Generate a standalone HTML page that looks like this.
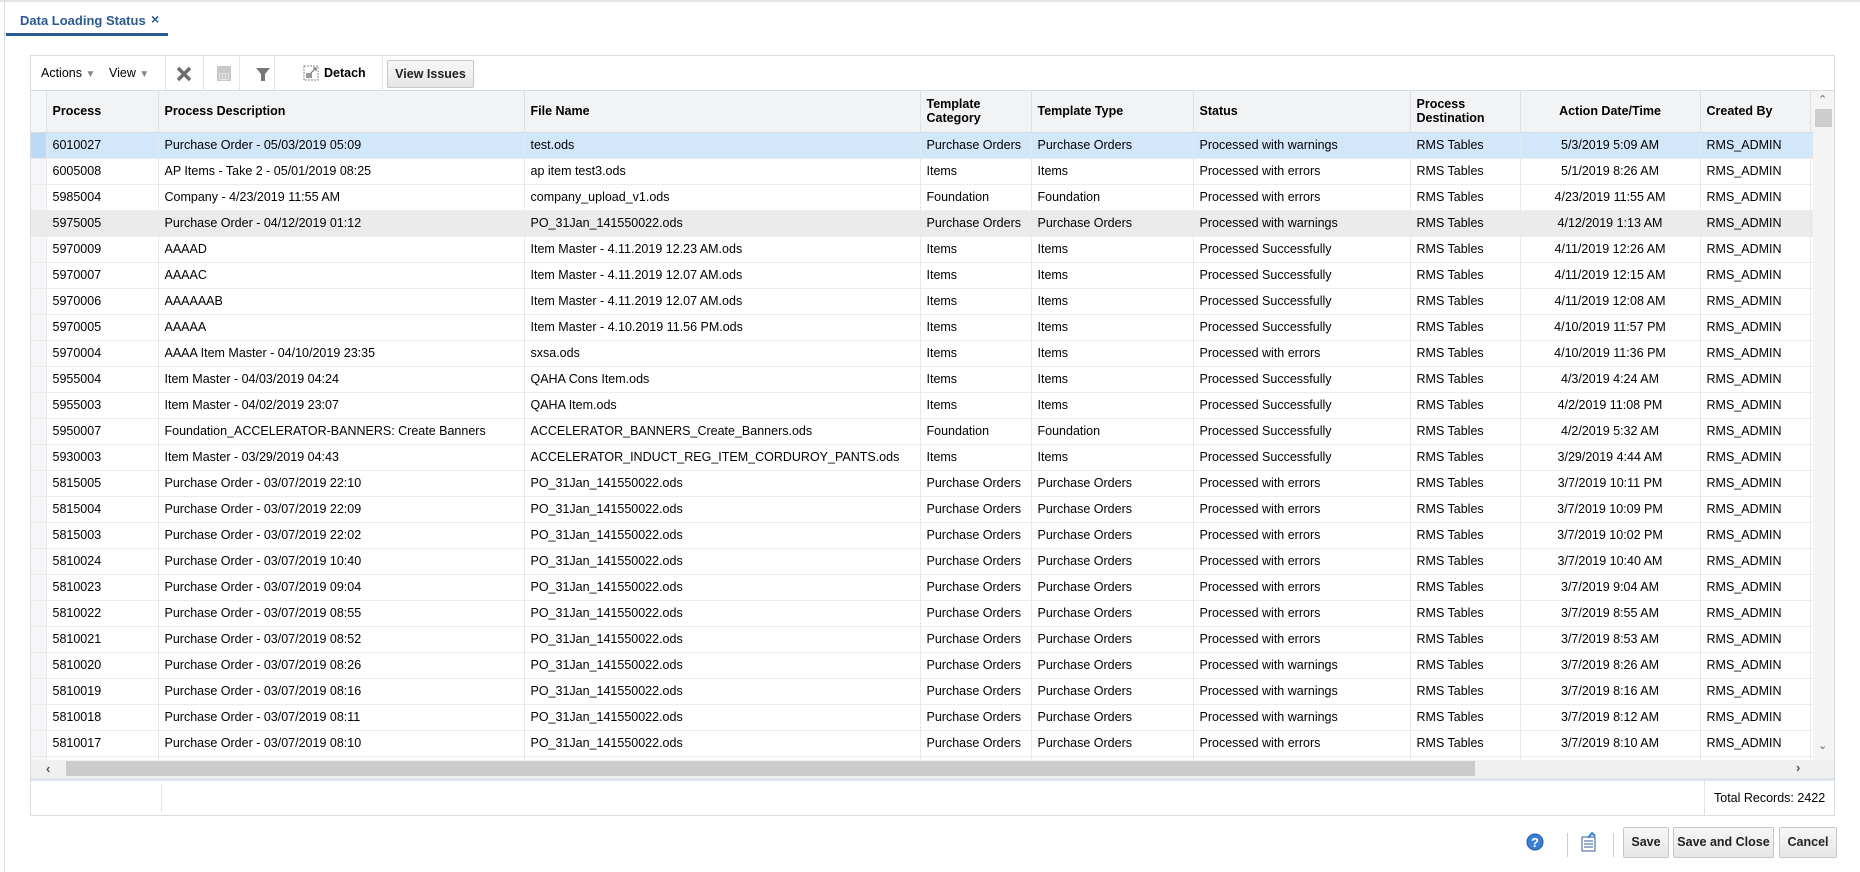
<!DOCTYPE html>
<html><head><meta charset="utf-8">
<style>
*{box-sizing:border-box;margin:0;padding:0}
body{width:1860px;height:872px;position:relative;background:#fff;font-family:"Liberation Sans",Arial,sans-serif;font-size:12.5px;color:#000;overflow:hidden}
.abs{position:absolute}
.tab{left:20px;top:13px;color:#2a5a93;font-weight:bold;font-size:13px}
.panel{left:30px;top:55px;width:1805px;height:761px;border:1px solid #d6dde5}
.tb{left:0;top:0;width:1803px;height:35px;border-bottom:1px solid #d6dde5}
.sep{position:absolute;top:0;width:1px;height:34px;background:#e0e4e8}
.grid{left:0;top:35px;width:1782px;height:669px;overflow:hidden}
table{border-collapse:collapse;table-layout:fixed;width:1878px}
td,th{height:26px;border-right:1px solid #e6e8ea;border-bottom:1px solid #ececec;padding:0 6px;white-space:nowrap;overflow:hidden;text-align:left;font-weight:normal}
th{height:41px;background:#f2f3f5;font-weight:bold;border-bottom:1px solid #d6dde5;border-right:1px solid #dde1e5;line-height:14px}
td.rh,th.rh{background:#f4f6f8;padding:0}
tr.sel td{background:#d2e7f9}
tr.sel td.rh{background:#bcdaf5}
tr.hov td{background:#ebebeb}
.c{text-align:center}
.vs{left:1782px;top:35px;width:21px;height:669px;background:#f4f4f4}
.hs{left:0;top:704px;width:1803px;height:21px;background:#f0f0f0;border-bottom:3px solid #dfe4ea}
.ft{left:0;top:725px;width:1803px;height:34px}
.btn{position:absolute;height:31px;border:1px solid #c4c8cc;border-radius:2px;background:linear-gradient(#f7f7f7,#e6e6e6);font-weight:bold;font-size:12.5px;line-height:29px;text-align:center;color:#222}
</style></head><body>
<div class="abs" style="left:0;top:0;width:1860px;height:2px;background:#e4e4e4"></div>
<div class="abs" style="left:4px;top:0;width:1px;height:872px;background:#dcdcdc"></div>
<div class="abs tab">Data Loading Status</div>
<div class="abs" style="left:151px;top:11px;color:#2a5a93;font-weight:bold;font-size:14px">×</div>
<div class="abs" style="left:6px;top:33px;width:162px;height:3px;background:#2a5a93"></div>

<div class="abs panel">
 <div class="abs tb">
  <span class="abs" style="left:10px;top:10px">Actions <span style="color:#888;font-size:10px">▼</span></span>
  <span class="abs" style="left:78px;top:10px">View <span style="color:#888;font-size:10px">▼</span></span>
  <div class="sep" style="left:134px"></div>
  <svg class="abs" style="left:145px;top:10px" width="16" height="16"><path d="M2 2L14 14M14 2L2 14" stroke="#6f6f6f" stroke-width="3.5"/></svg>
  <div class="sep" style="left:172px"></div>
  <svg class="abs" style="left:185px;top:9px" width="16" height="17"><rect x="1" y="1" width="14" height="15" fill="#c8c8c8"/><rect x="3" y="8" width="10" height="7" fill="#e4e4e4"/><path d="M5 9v5M8 9v5M11 9v5" stroke="#aaa"/></svg>
  <div class="sep" style="left:208px"></div>
  <svg class="abs" style="left:224px;top:10px" width="16" height="16"><path d="M1 2h14l-5 6v7h-4v-7z" fill="#777"/></svg>
  <div class="sep" style="left:243px"></div>
  <svg class="abs" style="left:272px;top:9px" width="16" height="16"><rect x="1" y="1" width="14" height="14" fill="none" stroke="#888" stroke-dasharray="2 1"/><rect x="3" y="8" width="6" height="5" fill="#999"/><path d="M8 8l5-5M10 3h3v3" stroke="#666" fill="none"/></svg>
  <span class="abs" style="left:293px;top:10px;font-weight:bold">Detach</span>
  <div class="sep" style="left:351px"></div>
  <div class="btn" style="left:356px;top:4px;width:87px;height:28px;line-height:26px">View Issues</div>
 </div>
 <div class="abs grid">
 <table>
 <colgroup><col style="width:15px"><col style="width:112px"><col style="width:366px"><col style="width:396px"><col style="width:111px"><col style="width:162px"><col style="width:217px"><col style="width:110px"><col style="width:180px"><col style="width:110px"><col style="width:99px"></colgroup>
 <tr><th class="rh"></th><th>Process</th><th>Process Description</th><th>File Name</th><th>Template<br>Category</th><th>Template Type</th><th>Status</th><th>Process<br>Destination</th><th class="c">Action Date/Time</th><th>Created By</th><th>Template</th></tr>
 <tr class="sel"><td class="rh"></td><td>6010027</td><td>Purchase Order - 05/03/2019 05:09</td><td>test.ods</td><td>Purchase Orders</td><td>Purchase Orders</td><td>Processed with warnings</td><td>RMS Tables</td><td class="c">5/3/2019 5:09 AM</td><td>RMS_ADMIN</td><td>P</td></tr>
 <tr><td class="rh"></td><td>6005008</td><td>AP Items - Take 2 - 05/01/2019 08:25</td><td>ap item test3.ods</td><td>Items</td><td>Items</td><td>Processed with errors</td><td>RMS Tables</td><td class="c">5/1/2019 8:26 AM</td><td>RMS_ADMIN</td><td>A</td></tr>
 <tr><td class="rh"></td><td>5985004</td><td>Company - 4/23/2019 11:55 AM</td><td>company_upload_v1.ods</td><td>Foundation</td><td>Foundation</td><td>Processed with errors</td><td>RMS Tables</td><td class="c">4/23/2019 11:55 AM</td><td>RMS_ADMIN</td><td>C</td></tr>
 <tr class="hov"><td class="rh"></td><td>5975005</td><td>Purchase Order - 04/12/2019 01:12</td><td>PO_31Jan_141550022.ods</td><td>Purchase Orders</td><td>Purchase Orders</td><td>Processed with warnings</td><td>RMS Tables</td><td class="c">4/12/2019 1:13 AM</td><td>RMS_ADMIN</td><td>P</td></tr>
 <tr><td class="rh"></td><td>5970009</td><td>AAAAD</td><td>Item Master - 4.11.2019 12.23 AM.ods</td><td>Items</td><td>Items</td><td>Processed Successfully</td><td>RMS Tables</td><td class="c">4/11/2019 12:26 AM</td><td>RMS_ADMIN</td><td>I</td></tr>
 <tr><td class="rh"></td><td>5970007</td><td>AAAAC</td><td>Item Master - 4.11.2019 12.07 AM.ods</td><td>Items</td><td>Items</td><td>Processed Successfully</td><td>RMS Tables</td><td class="c">4/11/2019 12:15 AM</td><td>RMS_ADMIN</td><td>I</td></tr>
 <tr><td class="rh"></td><td>5970006</td><td>AAAAAAB</td><td>Item Master - 4.11.2019 12.07 AM.ods</td><td>Items</td><td>Items</td><td>Processed Successfully</td><td>RMS Tables</td><td class="c">4/11/2019 12:08 AM</td><td>RMS_ADMIN</td><td>I</td></tr>
 <tr><td class="rh"></td><td>5970005</td><td>AAAAA</td><td>Item Master - 4.10.2019 11.56 PM.ods</td><td>Items</td><td>Items</td><td>Processed Successfully</td><td>RMS Tables</td><td class="c">4/10/2019 11:57 PM</td><td>RMS_ADMIN</td><td>I</td></tr>
 <tr><td class="rh"></td><td>5970004</td><td>AAAA Item Master - 04/10/2019 23:35</td><td>sxsa.ods</td><td>Items</td><td>Items</td><td>Processed with errors</td><td>RMS Tables</td><td class="c">4/10/2019 11:36 PM</td><td>RMS_ADMIN</td><td>I</td></tr>
 <tr><td class="rh"></td><td>5955004</td><td>Item Master - 04/03/2019 04:24</td><td>QAHA Cons Item.ods</td><td>Items</td><td>Items</td><td>Processed Successfully</td><td>RMS Tables</td><td class="c">4/3/2019 4:24 AM</td><td>RMS_ADMIN</td><td>I</td></tr>
 <tr><td class="rh"></td><td>5955003</td><td>Item Master - 04/02/2019 23:07</td><td>QAHA Item.ods</td><td>Items</td><td>Items</td><td>Processed Successfully</td><td>RMS Tables</td><td class="c">4/2/2019 11:08 PM</td><td>RMS_ADMIN</td><td>I</td></tr>
 <tr><td class="rh"></td><td>5950007</td><td>Foundation_ACCELERATOR-BANNERS: Create Banners</td><td>ACCELERATOR_BANNERS_Create_Banners.ods</td><td>Foundation</td><td>Foundation</td><td>Processed Successfully</td><td>RMS Tables</td><td class="c">4/2/2019 5:32 AM</td><td>RMS_ADMIN</td><td>F</td></tr>
 <tr><td class="rh"></td><td>5930003</td><td>Item Master - 03/29/2019 04:43</td><td>ACCELERATOR_INDUCT_REG_ITEM_CORDUROY_PANTS.ods</td><td>Items</td><td>Items</td><td>Processed Successfully</td><td>RMS Tables</td><td class="c">3/29/2019 4:44 AM</td><td>RMS_ADMIN</td><td>I</td></tr>
 <tr><td class="rh"></td><td>5815005</td><td>Purchase Order - 03/07/2019 22:10</td><td>PO_31Jan_141550022.ods</td><td>Purchase Orders</td><td>Purchase Orders</td><td>Processed with errors</td><td>RMS Tables</td><td class="c">3/7/2019 10:11 PM</td><td>RMS_ADMIN</td><td>P</td></tr>
 <tr><td class="rh"></td><td>5815004</td><td>Purchase Order - 03/07/2019 22:09</td><td>PO_31Jan_141550022.ods</td><td>Purchase Orders</td><td>Purchase Orders</td><td>Processed with errors</td><td>RMS Tables</td><td class="c">3/7/2019 10:09 PM</td><td>RMS_ADMIN</td><td>P</td></tr>
 <tr><td class="rh"></td><td>5815003</td><td>Purchase Order - 03/07/2019 22:02</td><td>PO_31Jan_141550022.ods</td><td>Purchase Orders</td><td>Purchase Orders</td><td>Processed with errors</td><td>RMS Tables</td><td class="c">3/7/2019 10:02 PM</td><td>RMS_ADMIN</td><td>P</td></tr>
 <tr><td class="rh"></td><td>5810024</td><td>Purchase Order - 03/07/2019 10:40</td><td>PO_31Jan_141550022.ods</td><td>Purchase Orders</td><td>Purchase Orders</td><td>Processed with errors</td><td>RMS Tables</td><td class="c">3/7/2019 10:40 AM</td><td>RMS_ADMIN</td><td>P</td></tr>
 <tr><td class="rh"></td><td>5810023</td><td>Purchase Order - 03/07/2019 09:04</td><td>PO_31Jan_141550022.ods</td><td>Purchase Orders</td><td>Purchase Orders</td><td>Processed with errors</td><td>RMS Tables</td><td class="c">3/7/2019 9:04 AM</td><td>RMS_ADMIN</td><td>P</td></tr>
 <tr><td class="rh"></td><td>5810022</td><td>Purchase Order - 03/07/2019 08:55</td><td>PO_31Jan_141550022.ods</td><td>Purchase Orders</td><td>Purchase Orders</td><td>Processed with errors</td><td>RMS Tables</td><td class="c">3/7/2019 8:55 AM</td><td>RMS_ADMIN</td><td>P</td></tr>
 <tr><td class="rh"></td><td>5810021</td><td>Purchase Order - 03/07/2019 08:52</td><td>PO_31Jan_141550022.ods</td><td>Purchase Orders</td><td>Purchase Orders</td><td>Processed with errors</td><td>RMS Tables</td><td class="c">3/7/2019 8:53 AM</td><td>RMS_ADMIN</td><td>P</td></tr>
 <tr><td class="rh"></td><td>5810020</td><td>Purchase Order - 03/07/2019 08:26</td><td>PO_31Jan_141550022.ods</td><td>Purchase Orders</td><td>Purchase Orders</td><td>Processed with warnings</td><td>RMS Tables</td><td class="c">3/7/2019 8:26 AM</td><td>RMS_ADMIN</td><td>P</td></tr>
 <tr><td class="rh"></td><td>5810019</td><td>Purchase Order - 03/07/2019 08:16</td><td>PO_31Jan_141550022.ods</td><td>Purchase Orders</td><td>Purchase Orders</td><td>Processed with warnings</td><td>RMS Tables</td><td class="c">3/7/2019 8:16 AM</td><td>RMS_ADMIN</td><td>P</td></tr>
 <tr><td class="rh"></td><td>5810018</td><td>Purchase Order - 03/07/2019 08:11</td><td>PO_31Jan_141550022.ods</td><td>Purchase Orders</td><td>Purchase Orders</td><td>Processed with warnings</td><td>RMS Tables</td><td class="c">3/7/2019 8:12 AM</td><td>RMS_ADMIN</td><td>P</td></tr>
 <tr><td class="rh"></td><td>5810017</td><td>Purchase Order - 03/07/2019 08:10</td><td>PO_31Jan_141550022.ods</td><td>Purchase Orders</td><td>Purchase Orders</td><td>Processed with errors</td><td>RMS Tables</td><td class="c">3/7/2019 8:10 AM</td><td>RMS_ADMIN</td><td>P</td></tr>
 <tr><td class="rh"></td><td></td><td></td><td></td><td></td><td></td><td></td><td></td><td></td><td></td><td></td></tr>
 </table>
 </div>
 <div class="abs vs">
  <div class="abs" style="left:5px;top:2px;color:#666;font-size:11px">&#8963;</div>
  <div class="abs" style="left:2px;top:18px;width:17px;height:18px;background:#cdcdcd"></div>
  <div class="abs" style="left:5px;top:648px;color:#666;font-size:11px">&#8964;</div>
 </div>
 <div class="abs hs">
  <div class="abs" style="left:15px;top:1px;color:#555;font-size:13px;font-weight:bold">‹</div>
  <div class="abs" style="left:35px;top:1px;width:1409px;height:15px;background:#cbcbcb"></div>
  <div class="abs" style="left:1765px;top:0px;color:#555;font-size:13px;font-weight:bold">›</div>
 </div>
 <div class="abs ft">
  <div class="abs" style="left:130px;top:3px;width:1px;height:28px;background:#e0e4e8"></div>
  <div class="abs" style="left:1673px;top:0;width:1px;height:34px;background:#e0e4e8"></div>
  <div class="abs" style="left:1683px;top:10px">Total Records: 2422</div>
 </div>
</div>

<svg class="abs" style="left:1526px;top:833px" width="18" height="18"><circle cx="9" cy="9" r="8" fill="#3b7fd4" stroke="#1f5aa8"/><text x="9" y="14" text-anchor="middle" font-family="Liberation Sans" font-weight="bold" font-size="13" fill="#fff">?</text></svg>
<div class="abs" style="left:1567px;top:833px;width:1px;height:24px;background:#ccc"></div>
<svg class="abs" style="left:1580px;top:832px" width="18" height="20"><rect x="2" y="5" width="13" height="14" fill="#fff" stroke="#335a9a"/><path d="M4 9h9M4 12h9M4 15h9" stroke="#335a9a"/><path d="M8 6l4-5 3 3" stroke="#2a8ad8" stroke-width="2" fill="none"/></svg>
<div class="abs" style="left:1613px;top:833px;width:1px;height:24px;background:#ccc"></div>
<div class="btn" style="left:1623px;top:827px;width:46px">Save</div>
<div class="btn" style="left:1673px;top:827px;width:101px">Save and Close</div>
<div class="btn" style="left:1779px;top:827px;width:58px">Cancel</div>
</body></html>
